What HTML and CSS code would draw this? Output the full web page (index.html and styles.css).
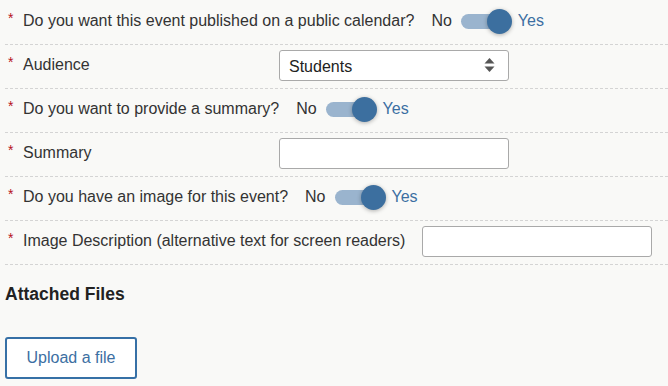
FILE: index.html
```html
<!DOCTYPE html>
<html lang="en">
  <head>
    <meta charset="UTF-8" />
    <meta name="viewport" content="width=device-width, initial-scale=1.0" />
    <title>Event details</title>
    <link rel="stylesheet" href="styles.css">
  </head>
  <body>
    <main class="event_form">
      <div class="row">
        <span class="req">*</span>
        <span class="label">Do you want this event published on a public calendar?</span>
        <span class="toggle">
          <span class="no">No</span>
          <span class="switch"></span>
          <span class="yes">Yes</span>
        </span>
      </div>
      <div class="row">
        <span class="req">*</span>
        <span class="label">Audience</span>
        <div class="select">
          <span class="select_value">Students</span>
          <svg width="11" height="16" viewBox="0 0 11 16">
            <path d="M5.5 1 L10.5 6.5 L0.5 6.5 Z" fill="#555" />
            <path d="M5.5 15 L10.5 9.5 L0.5 9.5 Z" fill="#555" />
          </svg>
        </div>
      </div>
      <div class="row">
        <span class="req">*</span>
        <span class="label">Do you want to provide a summary?</span>
        <span class="toggle">
          <span class="no">No</span>
          <span class="switch"></span>
          <span class="yes">Yes</span>
        </span>
      </div>
      <div class="row">
        <span class="req">*</span>
        <span class="label">Summary</span>
        <input class="text_input" type="text" />
      </div>
      <div class="row">
        <span class="req">*</span>
        <span class="label">Do you have an image for this event?</span>
        <span class="toggle">
          <span class="no">No</span>
          <span class="switch"></span>
          <span class="yes">Yes</span>
        </span>
      </div>
      <div class="row">
        <span class="req">*</span>
        <span class="label long">Image Description (alternative text for screen readers)</span>
        <input class="text_input" type="text" />
      </div>

      <h3 class="files_title">Attached Files</h3>
      <button class="upload_btn" type="button">Upload a file</button>
    </main>
  </body>
</html>
```

FILE: styles.css
```css
* {
  margin: 0;
  padding: 0;
  box-sizing: border-box;
}

body {
  background-color: #f9f9f7;
  font-family: 'Liberation Sans', Arial, sans-serif;
  font-size: 16px;
  color: #333;
}
.event_form {
  padding-top: 1px;
  margin-left: 5px;
}
.row {
  display: flex;
  align-items: center;
  height: 44px;
  padding-bottom: 3px;
  border-bottom: 1px dashed #d4d4d4;
}
.req {
  width: 15px;
  margin-left: 3px;
  align-self: center;
  font-size: 14px;
  color: #b5121b;
  position: relative;
  top: -3px;
}
.label {
  min-width: 240px;
  margin-right: 16px;
  white-space: nowrap;
}
.label.long {
  margin-right: 17px;
}
.toggle {
  display: flex;
  align-items: center;
  margin-left: 1px;
}
.no {
  margin-right: 9px;
}
.switch {
  position: relative;
  width: 51px;
  height: 24px;

  &::before {
    content: '';
    position: absolute;
    left: 0;
    right: 4px;
    top: 5px;
    height: 15px;
    border-radius: 8px;
    background-color: #9ab4ce;
  }
  &::after {
    content: '';
    position: absolute;
    right: 0;
    top: 0;
    width: 25px;
    height: 25px;
    border-radius: 50%;
    background-color: #3c6f9f;
    box-shadow: 0 1px 4px rgba(0, 0, 0, 0.3);
  }
}
.yes {
  margin-left: 6px;
  color: #3c6fa2;
}
.select {
  display: flex;
  align-items: center;
  justify-content: space-between;
  width: 230px;
  height: 31px;
  padding: 0 13px 0 9px;
  background-color: white;
  border: 1px solid #a9a9a9;
  border-radius: 3px;
  color: #222;
}
.select_value {
  padding-top: 4px;
}
.text_input {
  width: 230px;
  height: 31px;
  background-color: white;
  border: 1px solid #a9a9a9;
  border-radius: 3px;
}
.files_title {
  margin-top: 19px;
  font-size: 17.5px;
  font-weight: bold;
  color: #222;
}
.upload_btn {
  margin-top: 32px;
  width: 132px;
  height: 42px;
  background-color: white;
  border: 2px solid #3670a6;
  border-radius: 3px;
  font-family: inherit;
  font-size: 16px;
  color: #3c6fa2;
}
```
